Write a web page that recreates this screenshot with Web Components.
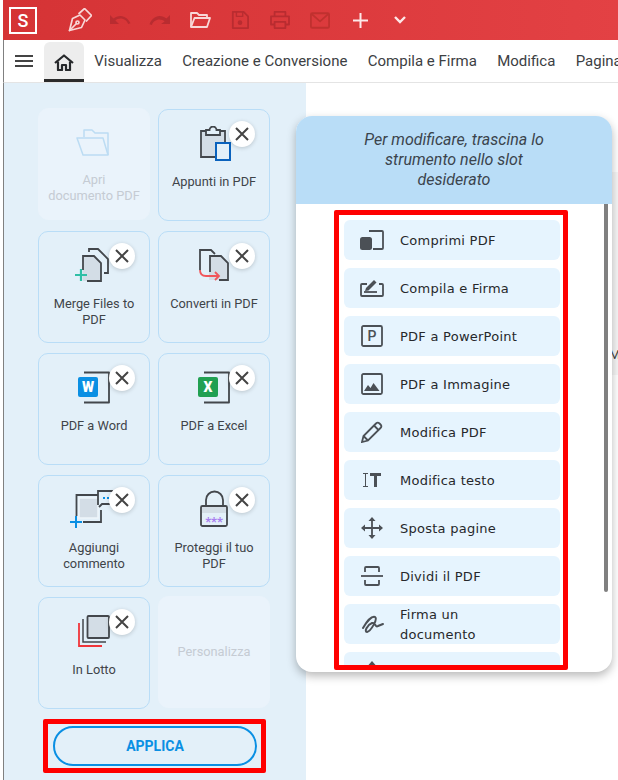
<!DOCTYPE html>
<html lang="it">
<head>
<meta charset="utf-8">
<title>Strumenti rapidi</title>
<style>
	html, body { margin: 0; padding: 0; background: #fff; height: 100%; overflow: hidden; }
	body { font-family: Roboto, "Liberation Sans", sans-serif; }
</style>
</head>
<body>
<pdf-app></pdf-app>

<script>
// Shared icons
const ICONS = {
	pen: `<svg width="24" height="24" viewBox="0 0 24 24" fill="none" stroke="#f8d7d7" stroke-width="1.700" stroke-linejoin="round" stroke-linecap="round"><path d="M1.500 22.500 4.500 10.500 12 7l5 5-3.500 7.500z"/><path d="M1.500 22.500 8.500 15.500"/><circle cx="9.500" cy="14.500" r="1.500"/><path d="M11 5.500 16.500.5l7 7-5 5.500"/></svg>`,
	undo: `<svg width="24" height="24" viewBox="0 0 24 24" fill="#b92c30"><path d="M12.500 8c-2.700 0-5.100 1-7 2.600L2 7v9h9l-3.600-3.600c1.400-1.200 3.200-1.900 5.100-1.900 3.500 0 6.500 2.300 7.600 5.500l2.400-.8C21 11.900 17.100 8 12.500 8z"/></svg>`,
	redo: `<svg width="24" height="24" viewBox="0 0 24 24" fill="#b92c30"><path d="M18.400 10.600C16.600 9 14.200 8 11.500 8 6.900 8 3 11.900 1.500 16.200l2.400.8c1.100-3.200 4.100-5.500 7.600-5.500 1.900 0 3.700.7 5.100 1.900L13 16h9V7z"/></svg>`,
	open: `<svg width="21" height="16" viewBox="0 0 21 16" fill="none" stroke="#f8d7d7" stroke-width="1.800" stroke-linejoin="round"><path d="M1 15V1h6l2 2h8v3"/><path d="M1 15 4.500 6H20l-3 9z"/></svg>`,
	save: `<svg width="18" height="18" viewBox="0 0 20 20" fill="none" stroke="#b92c30" stroke-width="2" stroke-linejoin="round"><path d="M2 1h12l5 5v13H2z"/><path d="M6 1v5h7V1" stroke-width="1.600"/><circle cx="10" cy="13" r="2.600" fill="#b92c30" stroke="none"/></svg>`,
	print: `<svg width="20" height="18" viewBox="0 0 22 20" fill="none" stroke="#b92c30" stroke-width="2" stroke-linejoin="round"><path d="M5 6V1h12v5"/><path d="M5 15H1V6h20v9h-4"/><path d="M5 12h12v7H5z"/></svg>`,
	mail: `<svg width="20" height="17" viewBox="0 0 22 18" fill="none" stroke="#c0312f" stroke-width="2" stroke-linejoin="round"><rect x="1" y="1" width="20" height="16" rx="1.500"/><path d="M2 2l9 8 9-8"/></svg>`,
	plus: `<svg width="15" height="15" viewBox="0 0 15 15" stroke="#fde8e8" stroke-width="2"><path d="M7.500 0v15M0 7.500h15"/></svg>`,
	chevron: `<svg width="14" height="10" viewBox="0 0 14 10" fill="none" stroke="#fde8e8" stroke-width="2.400"><path d="M2 2l5 5 5-5"/></svg>`,
	burger: `<svg width="18" height="12" viewBox="0 0 18 12" stroke="#444" stroke-width="2"><path d="M0 1h18M0 6h18M0 11h18"/></svg>`,
	home: `<svg width="20" height="17" viewBox="0 0 20 17" fill="none" stroke="#26282b" stroke-width="2.200" stroke-linejoin="round"><path d="M1 9 10 1.500 19 9"/><path d="M4 7.500V16h4v-5h4v5h4V7.500"/></svg>`
};

class PdfApp extends HTMLElement {
	constructor() {
		super();
		this.attachShadow({ mode: 'open' });
		this.shadowRoot.innerHTML = `
			<style>
				:host { display: flex; flex-direction: column; height: 780px; padding-left: 3px; box-sizing: border-box; position: relative; }
				main { flex: 1; display: flex; min-height: 0; border-left: 1px solid #808080; position: relative; }
				.doc { flex: 1; min-width: 0; background: #fff; overflow: hidden; padding-top: 89px; }
				.page { height: 203px; box-sizing: border-box; background: #f6f6f6; padding: 175px 0 0 303px; font: 400 13px/16px Roboto, sans-serif; color: #444; }
			</style>
			<title-bar></title-bar>
			<tab-bar></tab-bar>
			<main>
				<tool-sidebar></tool-sidebar>
				<div class="doc"><div class="page">M</div></div>
				<customize-panel></customize-panel>
			</main>
		`;
	}
}

class TitleBar extends HTMLElement {
	constructor() {
		super();
		this.attachShadow({ mode: 'open' });
		this.shadowRoot.innerHTML = `
			<style>
				:host { display: flex; align-items: center; height: 40px; flex: none; background: linear-gradient(90deg, #d53335, #e34144); }
				.logo { width: 24px; height: 23px; border: 2px solid #fff; margin: 0 0 0 6px; display: flex; align-items: center; justify-content: center; color: #fff; font: 500 18px Roboto, sans-serif; }
				.btn { width: 40px; height: 40px; display: flex; align-items: center; justify-content: center; flex: none; }
				.tools { display: flex; margin-left: 23px; }
			</style>
			<div class="logo">S</div>
			<div class="tools">
				<div class="btn">${ICONS.pen}</div>
				<div class="btn">${ICONS.undo}</div>
				<div class="btn">${ICONS.redo}</div>
				<div class="btn">${ICONS.open}</div>
				<div class="btn">${ICONS.save}</div>
				<div class="btn">${ICONS.print}</div>
				<div class="btn">${ICONS.mail}</div>
				<div class="btn">${ICONS.plus}</div>
				<div class="btn">${ICONS.chevron}</div>
			</div>
		`;
	}
}

class TabBar extends HTMLElement {
	constructor() {
		super();
		this.attachShadow({ mode: 'open' });
		const tabs = ['Visualizza', 'Creazione e Conversione', 'Compila e Firma', 'Modifica', 'Pagina'];
		this.shadowRoot.innerHTML = `
			<style>
				:host { display: flex; height: 43px; flex: none; background: #fff; border-left: 1px solid #808080; box-sizing: border-box; border-bottom: 1px solid #e4e4e4; overflow: hidden; white-space: nowrap; font: 400 15px Roboto, sans-serif; color: #3c4043; }
				.burger { width: 40px; display: flex; align-items: center; justify-content: center; flex: none; }
				.home { width: 40px; height: 40px; margin-top: 2px; padding-top: 3px; box-sizing: border-box; background: #ededed; border-radius: 6px 6px 0 0; border-bottom: 3px solid #2b2b2b; display: flex; align-items: center; justify-content: center; flex: none; }
				.tab { padding: 0 10.200px; line-height: 42px; flex: none; }
			</style>
			<div class="burger">${ICONS.burger}</div>
			<div class="home">${ICONS.home}</div>
			${tabs.map(t => `<div class="tab">${t}</div>`).join('')}
		`;
	}
}

class ToolTile extends HTMLElement {
	constructor() {
		super();
		this.attachShadow({ mode: 'open' });
		const muted = this.hasAttribute('muted');
		this.shadowRoot.innerHTML = `
			<style>
				:host { display: block; position: relative; width: 112px; height: 112px; box-sizing: border-box; border: 1px solid #b9ddf7; border-radius: 10px; }
				:host([muted]) { border-color: #eaf3fb; background: #eaf3fb; margin-top: -1px; }
				.icon { height: 48px; margin-top: 9px; display: flex; justify-content: center; align-items: center; }
				:host([bare]) .icon { display: none; }
				:host([bare]) .label { margin-top: 47px; }
				.label { margin-top: ${muted ? 6 : 7}px; padding: 0 6px; text-align: center; font: 400 12.800px/16px Roboto, sans-serif; color: ${muted ? '#c5cbd3' : '#3f4449'}; }
				.close { position: absolute; top: 11px; right: 14px; width: 26px; height: 26px; border-radius: 50%; background: #fff; box-shadow: 0 1px 4px rgba(0,0,0,.18); display: flex; align-items: center; justify-content: center; }
			</style>
			<div class="icon"><slot name="icon"></slot></div>
			<div class="label"><slot></slot></div>
			${muted ? '' : `<div class="close"><svg width="14" height="14" viewBox="0 0 14 14" stroke="#444" stroke-width="2"><path d="M1 1l12 12M13 1 1 13"/></svg></div>`}
		`;
	}
}

class ToolSidebar extends HTMLElement {
	constructor() {
		super();
		this.attachShadow({ mode: 'open' });
		const d = 'stroke="#43474c" stroke-width="1.800"';
		this.shadowRoot.innerHTML = `
			<style>
				:host { display: flex; flex-direction: column; align-items: flex-start; width: 302px; flex: none; box-sizing: border-box; background: #e3f0f9; padding: 26px 0 0 34px; }
				.grid { display: grid; grid-template-columns: 112px 112px; column-gap: 8px; row-gap: 10px; }
				.apply { margin: 10px 0 0 5px; width: 223px; height: 54px; box-sizing: border-box; border: 5px solid #f00; border-radius: 2px; padding: 2px 5px; }
				button { display: block; width: 204px; height: 40px; box-sizing: border-box; border: 2px solid #0a8fe3; border-radius: 20px; background: transparent; color: #0a8fe3; font: 700 14px Roboto, sans-serif; padding: 0; }
			</style>
			<div class="grid">
				<tool-tile muted>
					<svg slot="icon" style="margin-right:2px" width="34" height="27" viewBox="0 0 34 27" fill="none" stroke="#bcdcf3" stroke-width="1.500" stroke-linejoin="round"><path d="M8 8V1h8l3 3h13v22"/><path d="M1 9h26l5 17H7z"/></svg>
					Apri<br>documento PDF
				</tool-tile>
				<tool-tile>
					<svg slot="icon" style="margin-left:3px" width="31" height="35" viewBox="0 0 31 35" fill="none"><path d="M2 5h22v26H2z" fill="#d3dde6"/><path d="M6 5H1v26h15" ${d}/><path d="M20 5h5v12" ${d}/><path d="M6 9V4h3.500a3.500 3.500 0 0 1 7 0H20v5z" fill="#e3f0f9" ${d}/><rect x="16" y="17" width="14" height="17" fill="#e3f0f9" stroke="#0a62bd" stroke-width="2"/></svg>
					Appunti in PDF
				</tool-tile>
				<tool-tile>
					<svg slot="icon" style="margin-right:4px" width="34" height="34" viewBox="0 0 34 34" fill="none"><path d="M8 8h11l7 7v18H8z" fill="#d3dde6"/><path d="M14 4V1h9l10 10v14h-4" ${d}/><path d="M8 22V8h11l7 7v18H12" ${d}/><path d="M0 27h12M6 21v12" stroke="#2fbfa6" stroke-width="2.200"/></svg>
					Merge Files to PDF
				</tool-tile>
				<tool-tile>
					<svg slot="icon" width="30" height="32" viewBox="0 0 30 32" fill="none"><path d="M10 7h12l7 7v17H10z" fill="#d3dde6"/><path d="M1 21V1h11l4 4" ${d}/><path d="M11 23V7h11l7 7v17h-9" ${d}/><path d="M1 21c0 4 2 6 6 6h13" stroke="#f0555a" stroke-width="1.800"/><path d="M16 23l4 4-4 4" stroke="#f0555a" stroke-width="1.800"/></svg>
					Converti in PDF
				</tool-tile>
				<tool-tile>
					<svg slot="icon" width="32" height="33" viewBox="0 0 32 33" fill="none"><path d="M6 1.500h25v30H6" ${d} stroke-linejoin="round"/><rect x="0" y="6" width="20" height="20" rx="2" fill="#0a8fe3"/><text x="10" y="21" text-anchor="middle" font-family="Roboto, sans-serif" font-weight="900" font-size="14" fill="#fff">W</text></svg>
					PDF a Word
				</tool-tile>
				<tool-tile>
					<svg slot="icon" width="32" height="33" viewBox="0 0 32 33" fill="none"><path d="M6 1.500h25v30H6" ${d} stroke-linejoin="round"/><rect x="0" y="6" width="20" height="20" rx="2" fill="#21a052"/><text x="10" y="21" text-anchor="middle" font-family="Roboto, sans-serif" font-weight="900" font-size="14" fill="#fff">X</text></svg>
					PDF a Excel
				</tool-tile>
				<tool-tile>
					<svg slot="icon" style="margin-right:5px" width="43" height="38" viewBox="0 0 43 38" fill="none"><rect x="9" y="8" width="19" height="20" fill="#d3dde6" stroke="#eef5fa" stroke-width="1.500"/><path d="M6.500 26V5H28M13 32h18V20" ${d}/><path d="M0 32h12M6 26v12" stroke="#0a8fe3" stroke-width="2"/><path d="M28 15V1h15v13H32l-3 3" fill="#e3f0f9" ${d}/><path d="M33 8h2M37 8h2" stroke="#0a8fe3" stroke-width="2"/></svg>
					Aggiungi commento
				</tool-tile>
				<tool-tile>
					<svg slot="icon" style="overflow:visible" width="28" height="36" viewBox="0 0 28 36" fill="none"><path d="M6 15V9a8.500 8.500 0 0 1 17 0v6" ${d}/><rect x="1" y="15" width="26" height="20" rx="1.500" fill="#e3f0f9" ${d}/><rect x="2" y="16" width="24" height="6" fill="#d3dde6"/><text x="14" y="35" text-anchor="middle" font-family="Roboto, sans-serif" font-weight="700" font-size="13" fill="#a87ff0">***</text></svg>
					Proteggi il tuo PDF
				</tool-tile>
				<tool-tile>
					<svg slot="icon" width="32" height="32" viewBox="0 0 32 32" fill="none"><path d="M1 8v23h23" stroke="#f0353a" stroke-width="1.800"/><path d="M5 4v23h23" stroke="#43474c" stroke-width="1.500"/><rect x="9.500" y="1" width="21.500" height="22" rx="1" fill="#d3dde6" ${d}/></svg>
					In Lotto
				</tool-tile>
				<tool-tile muted bare>Personalizza</tool-tile>
			</div>
			<div class="apply"><button>APPLICA</button></div>
		`;
	}
}

class PanelItem extends HTMLElement {
	constructor() {
		super();
		this.attachShadow({ mode: 'open' });
		this.shadowRoot.innerHTML = `
			<style>
				:host { display: flex; align-items: center; height: 40px; flex: none; box-sizing: border-box; background: #e6f4fe; border-radius: 6px; padding-left: 16px; }
				.icon { width: 24px; height: 24px; flex: none; display: flex; align-items: center; justify-content: center; }
				.text { margin: 2px 0 0 16px; width: 130px; font: 400 13px/20px "DejaVu Sans", sans-serif; letter-spacing: .25px; color: #26282b; }
			</style>
			<div class="icon"><slot name="icon"></slot></div>
			<div class="text"><slot></slot></div>
		`;
	}
}

class CustomizePanel extends HTMLElement {
	constructor() {
		super();
		this.attachShadow({ mode: 'open' });
		const s = 'fill="none" stroke="#4b5056" stroke-width="1.800"';
		this.shadowRoot.innerHTML = `
			<style>
				:host { position: absolute; left: 292px; top: 33px; width: 316px; height: 556px; background: #fff; border-radius: 16px; box-shadow: 0 4px 10px rgba(0,0,0,.28); display: flex; flex-direction: column; overflow: hidden; }
				header { height: 88px; flex: none; box-sizing: border-box; background: #b9ddf7; padding: 14px 40px 0; text-align: center; font: italic 400 16px/20px Roboto, sans-serif; color: #3b444d; }
				.body { flex: 1; position: relative; padding: 6px 0 0 38px; min-height: 0; }
				.frame { width: 234px; height: 460px; box-sizing: border-box; border: 5px solid #f00; border-radius: 2px; padding: 5px 3px 0 5px; overflow: hidden; display: flex; flex-direction: column; gap: 8px; }
				.bar { position: absolute; left: 308px; top: 0; width: 4px; height: 388px; background: #808080; border-radius: 0 0 2px 2px; }
			</style>
			<header>Per modificare, trascina lo<br>strumento nello slot<br>desiderato</header>
			<div class="body">
				<div class="frame">
					<panel-item><svg slot="icon" width="24" height="20" viewBox="0 0 24 20" ${s}><path d="M9 1h13a1 1 0 0 1 1 1v16a1 1 0 0 1-1 1H13"/><rect x="0" y="7" width="12" height="13" rx="2.500" fill="#4b5056" stroke="none"/></svg>Comprimi PDF</panel-item>
					<panel-item><svg slot="icon" width="24" height="18" viewBox="0 0 24 18" ${s}><path d="M7 5H2a1 1 0 0 0-1 1v10a1 1 0 0 0 1 1h20a1 1 0 0 0 1-1V6a1 1 0 0 0-1-1h-3"/><path d="M5 12l1-3 8-8 2.500 2.500-8 8z" fill="#4b5056" stroke="none"/><path d="M4 13h13"/></svg>Compila e Firma</panel-item>
					<panel-item><svg slot="icon" width="22" height="22" viewBox="0 0 22 22" ${s}><rect x="1" y="1" width="20" height="20" rx="1.500"/><text x="11" y="16" text-anchor="middle" font-family="Roboto, sans-serif" font-weight="500" font-size="14" fill="#4b5056" stroke="none">P</text></svg>PDF a PowerPoint</panel-item>
					<panel-item><svg slot="icon" width="22" height="22" viewBox="0 0 22 22" ${s}><rect x="1" y="1" width="20" height="20" rx="1.500"/><path d="M3 18l4-6 2.500 3 3-5 6 8z" fill="#4b5056" stroke="none"/></svg>PDF a Immagine</panel-item>
					<panel-item><svg slot="icon" width="22" height="22" viewBox="0 0 22 22" ${s}><path d="M1 21l1.500-6L15 2.500a2.500 2.500 0 0 1 3.500 0l1 1a2.500 2.500 0 0 1 0 3.500L7 19.500z"/><path d="M13 4.500l4.500 4.500M2.500 15 7 19.500"/></svg>Modifica PDF</panel-item>
					<panel-item><svg slot="icon" width="18" height="14" viewBox="0 0 18 14" fill="none"><path d="M0 .5h5M0 13.500h5M2.500 .5v13" stroke="#4b5056" stroke-width="1"/><path d="M7 1.500h11M12.500 1v13" stroke="#4b5056" stroke-width="3"/></svg>Modifica testo</panel-item>
					<panel-item><svg slot="icon" width="22" height="22" viewBox="0 0 22 22" fill="#4b5056"><path d="M11 2v18M2 11h18" stroke="#4b5056" stroke-width="1.800"/><path d="M11 0l3.500 4h-7zM11 22l3.500-4h-7zM0 11l4-3.500v7zM22 11l-4-3.500v7z"/></svg>Sposta pagine</panel-item>
					<panel-item><svg slot="icon" width="22" height="20" viewBox="0 0 22 20" ${s}><path d="M0 10h22"/><path d="M4 6V2a1 1 0 0 1 1-1h12a1 1 0 0 1 1 1v4M4 14v4a1 1 0 0 0 1 1h12a1 1 0 0 0 1-1v-4"/></svg>Dividi il PDF</panel-item>
					<panel-item><svg slot="icon" width="23" height="20" viewBox="0 0 23 20" fill="none" stroke="#4b5056" stroke-width="2" stroke-linecap="round"><path d="M2 14C6 7 11 2 14 3c3 2-4 14-8 15-3 0 0-7 5-9 4-1 3 5 6 3l5-2"/></svg>Firma un<br>documento</panel-item>
					<panel-item><svg slot="icon" width="22" height="22" viewBox="0 0 22 22" fill="#4b5056"><path d="M11 0l3.500 4h-7z"/></svg>&nbsp;</panel-item>
				</div>
				<div class="bar"></div>
			</div>
		`;
	}
}

customElements.define('tool-tile', ToolTile);
customElements.define('panel-item', PanelItem);
customElements.define('title-bar', TitleBar);
customElements.define('tab-bar', TabBar);
customElements.define('tool-sidebar', ToolSidebar);
customElements.define('customize-panel', CustomizePanel);
customElements.define('pdf-app', PdfApp);
</script>
</body>
</html>
